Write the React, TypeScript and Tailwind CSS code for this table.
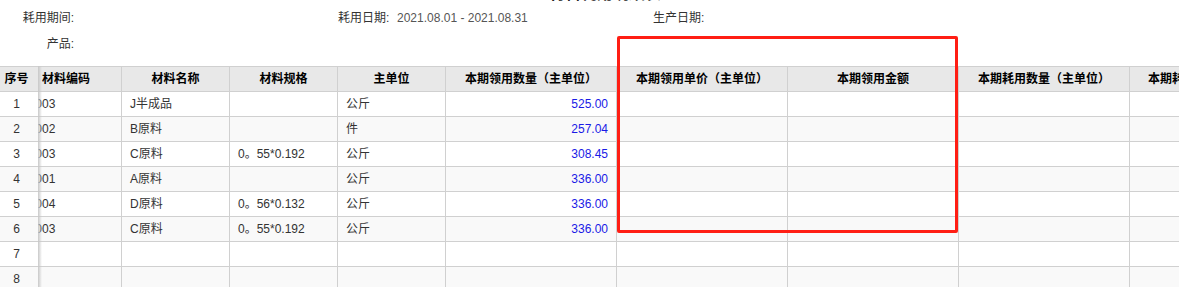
import React from 'react';

const rows = [
  { code: '10003', name: 'J半成品', spec: '', unit: '公斤', qty: '525.00' },
  { code: '10002', name: 'B原料', spec: '', unit: '件', qty: '257.04' },
  { code: '10003', name: 'C原料', spec: '0。55*0.192', unit: '公斤', qty: '308.45' },
  { code: '10001', name: 'A原料', spec: '', unit: '公斤', qty: '336.00' },
  { code: '10004', name: 'D原料', spec: '0。56*0.132', unit: '公斤', qty: '336.00' },
  { code: '10003', name: 'C原料', spec: '0。55*0.192', unit: '公斤', qty: '336.00' },
  { code: '', name: '', spec: '', unit: '', qty: '' },
  { code: '', name: '', spec: '', unit: '', qty: '' },
];

const headers = [
  { label: '材料编码', w: 'w-[108px]', align: 'justify-start pl-[28px]' },
  { label: '材料名称', w: 'w-[108px]', align: 'justify-center' },
  { label: '材料规格', w: 'w-[108px]', align: 'justify-center' },
  { label: '主单位', w: 'w-[108px]', align: 'justify-center' },
  { label: '本期领用数量（主单位）', w: 'w-[171px]', align: 'justify-center' },
  { label: '本期领用单价（主单位）', w: 'w-[171px]', align: 'justify-center' },
  { label: '本期领用金额', w: 'w-[171px]', align: 'justify-center' },
  { label: '本期耗用数量（主单位）', w: 'w-[171px]', align: 'justify-center' },
  { label: '本期耗用金额（主单位）', w: 'w-[171px]', align: 'justify-start pl-[18px]' },
];

const cell = 'h-[25px] shrink-0 border-r border-b border-[#d0d0d0] flex items-center overflow-hidden whitespace-nowrap';

export default function App() {
  return (
    <div className="relative w-[1195px] h-[287px] overflow-hidden bg-white text-[12px] text-[#333] font-['Liberation_Sans','Noto_Sans_CJK_SC',sans-serif]">
      {/* title, mostly scrolled above */}
      <div className="h-[4px] overflow-hidden relative">
        <div className="absolute left-[511px] top-[-18px] flex items-center gap-[22px] text-[16px] font-bold text-[#222]">
          <span className="text-[#999]">一</span>
          <span>材料耗用明细表</span>
        </div>
      </div>

      <div className="flex items-center h-[28px]">
        <div className="w-[74px] text-right">耗用期间:</div>
        <div className="w-[264px]" />
        <div className="w-[59px]">耗用日期:</div>
        <div className="w-[256px] text-[#555]">2021.08.01 - 2021.08.31</div>
        <div>生产日期:</div>
      </div>
      <div className="flex items-center h-[24px]">
        <div className="w-[74px] text-right">产品:</div>
      </div>

      <div className="flex mt-[10px]">
        {/* frozen column */}
        <div className="relative w-[38px] shrink-0">
          <div className="h-[26px] border-t border-b border-[#d0d0d0] bg-[#e8e8e8] flex items-center justify-center pr-[5px] font-bold text-black">
            序号
          </div>
          {rows.map((_, i) => (
            <div
              key={i}
              className={`h-[25px] border-b border-[#d0d0d0] flex items-center justify-center pr-[5px] ${i % 2 === 1 ? 'bg-[#f9f9f9]' : 'bg-white'}`}
            >
              {i + 1}
            </div>
          ))}
          <div className="absolute top-0 bottom-0 right-[-4px] w-[4px] bg-gradient-to-r from-[#c8c8c8] to-transparent z-10" />
        </div>

        {/* scrolled body */}
        <div className="w-[1141px] overflow-hidden">
          <div className="ml-[-24px] w-[1300px]">
            <div className="flex bg-[#e8e8e8] border-t border-[#d0d0d0] font-bold text-black">
              {headers.map((h) => (
                <div key={h.label} className={`${cell} ${h.w} ${h.align}`}>
                  {h.label}
                </div>
              ))}
            </div>
            {rows.map((r, i) => (
              <div key={i} className={`flex ${i % 2 === 1 ? 'bg-[#f9f9f9]' : 'bg-white'}`}>
                <div className={`${cell} w-[108px] pl-[8px]`}>{r.code}</div>
                <div className={`${cell} w-[108px] pl-[8px]`}>{r.name}</div>
                <div className={`${cell} w-[108px] pl-[8px]`}>{r.spec}</div>
                <div className={`${cell} w-[108px] pl-[8px]`}>{r.unit}</div>
                <div className={`${cell} w-[171px] justify-end pr-[8px] text-[#1a1ae6]`}>{r.qty}</div>
                <div className={`${cell} w-[171px]`} />
                <div className={`${cell} w-[171px]`} />
                <div className={`${cell} w-[171px]`} />
                <div className={`${cell} w-[171px]`} />
              </div>
            ))}
          </div>
        </div>
      </div>

      {/* red annotation box */}
      <div className="absolute left-[617px] top-[36px] w-[341px] h-[197px] border-[3px] border-[#ff1e14] rounded-[2px] pointer-events-none" />
    </div>
  );
}
